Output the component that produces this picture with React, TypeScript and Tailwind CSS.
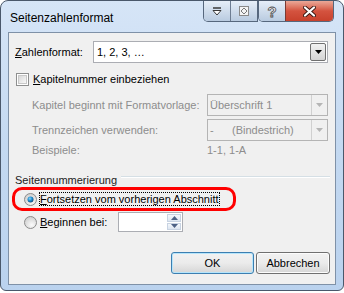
import React from "react";

function Arrow({ color = "#000" }: { color?: string }) {
  return (
    <svg width="7" height="4" viewBox="0 0 7 4">
      <path d="M0 0h7L3.5 4z" fill={color} />
    </svg>
  );
}

function Checkbox() {
  return (
    <div className="w-[13px] h-[13px] border border-[#8e8f8f] bg-white p-[1px] shrink-0">
      <div className="w-full h-full border border-[#c8c8c8] bg-gradient-to-br from-[#d8d8d8] to-[#f8f8f8]" />
    </div>
  );
}

function Radio({ checked }: { checked?: boolean }) {
  return (
    <svg width="13" height="13" viewBox="0 0 13 13" className="shrink-0">
      <defs>
        <radialGradient id="rbg" cx="0.6" cy="0.7" r="0.7">
          <stop offset="0" stopColor="#fbfbfb" />
          <stop offset="1" stopColor="#cfcfcf" />
        </radialGradient>
        <radialGradient id="rdot" cx="0.4" cy="0.35" r="0.7">
          <stop offset="0" stopColor="#8fd3f5" />
          <stop offset="0.5" stopColor="#1c8fd0" />
          <stop offset="1" stopColor="#0b3f72" />
        </radialGradient>
      </defs>
      <circle cx="6.5" cy="6.5" r="6" fill="url(#rbg)" stroke="#8c8c8c" />
      {checked && <circle cx="6.5" cy="6.5" r="3" fill="url(#rdot)" />}
    </svg>
  );
}

function DisabledCombo({ children }: { children: React.ReactNode }) {
  return (
    <div className="w-[121px] h-[22px] border border-[#b4b4b4] bg-[#f0f0f0] flex">
      <div className="flex-1 pl-[2px] flex items-center text-[#8d8d8d]">{children}</div>
      <div className="w-[16px] border-l border-[#d0d0d0] flex items-center justify-center">
        <Arrow color="#b5b5b5" />
      </div>
    </div>
  );
}

function TitleButton({ children, className }: { children: React.ReactNode; className: string }) {
  return <div className={"h-[20px] flex items-center justify-center " + className}>{children}</div>;
}

export default function App() {
  return (
    <div
      className="w-[344px] h-[293px] bg-white text-[11px] text-black whitespace-nowrap"
      style={{ fontFamily: "'Liberation Sans', Arial, sans-serif" }}
    >
      <div className="w-[344px] h-[291px] rounded-t-[8px] rounded-b-[6px] border border-[#4a586b] bg-gradient-to-b from-[#d6e5f7] via-[#c4d9f1] to-[#bad2ee] flex flex-col">
        {/* title bar */}
        <div className="h-[31px] flex items-start justify-between pl-[9px] pr-[9px] shrink-0">
          <div className="pt-[8px] text-[12px] text-black">Seitenzahlenformat</div>
          <div className="flex">
            <div className="flex border border-t-0 border-[#56677d] rounded-bl-[5px] overflow-hidden">
              <TitleButton className="w-[27px] bg-gradient-to-b from-[#e6eef8] to-[#b9cbe0] border-r border-[#6d7d92]">
                <svg width="10" height="9" viewBox="0 0 10 9">
                  <path d="M1 1h8" stroke="#3a3a3a" strokeWidth="1.5" />
                  <path d="M1 3.5h8L5 8z" fill="#fff" stroke="#3a3a3a" strokeWidth="1" />
                </svg>
              </TitleButton>
              <TitleButton className="w-[26px] bg-gradient-to-b from-[#e6eef8] to-[#b9cbe0]">
                <svg width="10" height="10" viewBox="0 0 10 10">
                  <rect x="0.5" y="0.5" width="9" height="9" fill="#f4f4f4" stroke="#8a8a8a" />
                  <path d="M5 2l3 3-3 3-3-3z" fill="none" stroke="#7a7a7a" />
                </svg>
              </TitleButton>
            </div>
            <div className="flex border border-t-0 border-[#56677d] rounded-bl-[5px] rounded-br-[5px] overflow-hidden">
              <TitleButton className="w-[27px] bg-gradient-to-b from-[#e6eef8] to-[#b9cbe0] border-r border-[#7a3a32]">
                <span
                  className="text-[15px] font-bold text-[#f4f6f9] leading-none"
                  style={{ WebkitTextStroke: "0.8px #4a4a4a" }}
                >
                  ?
                </span>
              </TitleButton>
              <TitleButton className="w-[47px] bg-gradient-to-b from-[#eaa898] via-[#d4533f] to-[#c8412c]">
                <svg width="13" height="11" viewBox="0 0 13 11">
                  <path d="M2 1.5l9 8M11 1.5l-9 8" stroke="#3b1a14" strokeWidth="4" strokeLinecap="round" />
                  <path d="M2 1.5l9 8M11 1.5l-9 8" stroke="#fff" strokeWidth="2.2" strokeLinecap="round" />
                </svg>
              </TitleButton>
            </div>
          </div>
        </div>

        {/* client area */}
        <div className="mx-[7px] mb-[5px] flex-1 border border-[#7f91a7] bg-[#f0f0f0] flex flex-col pt-[8px] pl-[6px] pr-[5px]">
          <div className="h-[22px] flex items-center">
            <div className="w-[78px]">
              <span className="underline">Z</span>ahlenformat:
            </div>
            <div className="w-[235px] h-[22px] border border-[#abadb3] bg-white flex">
              <div className="flex-1 pl-[3px] flex items-center">1, 2, 3, …</div>
              <div className="w-[16px] my-[1px] mr-[1px] border border-[#707070] rounded-[2px] bg-gradient-to-b from-[#f2f2f2] to-[#d4d4d4] flex items-center justify-center">
                <Arrow />
              </div>
            </div>
          </div>

          <div className="h-[16px] mt-[8px] flex items-center gap-[4px] pl-[1px]">
            <Checkbox />
            <div>
              <span className="underline">K</span>apitelnummer einbeziehen
            </div>
          </div>

          <div className="h-[22px] mt-[7px] flex items-center pl-[17px]">
            <div className="w-[175px] text-[#8d8d8d]">Kapitel beginnt mit Formatvorlage:</div>
            <DisabledCombo>Überschrift 1</DisabledCombo>
          </div>

          <div className="h-[22px] mt-[3px] flex items-center pl-[17px]">
            <div className="w-[175px] text-[#8d8d8d]">Trennzeichen verwenden:</div>
            <DisabledCombo>
              <span className="w-[22px]">-</span>(Bindestrich)
            </DisabledCombo>
          </div>

          <div className="h-[16px] mt-[1px] flex items-center pl-[17px] text-[#8d8d8d]">
            <div className="w-[175px]">Beispiele:</div>
            <div>1-1, 1-A</div>
          </div>

          <div className="h-[14px] mt-[15px] flex items-start">
            <div className="leading-[14px] text-[#222]">Seitennummerierung</div>
            <div className="flex-1 mt-[3px] ml-[4px] h-[2px] border-t border-[#d5dfe5] border-b border-b-white" />
          </div>

          <div className="-ml-[3px] w-[224px] h-[24px] border-[3px] border-[#ff0000] rounded-[10px] flex items-center pl-[9px]">
            <Radio checked />
            <div className="ml-[2px] px-[1px] leading-[14px] outline outline-1 outline-dotted outline-black -outline-offset-1">
              <span className="underline">F</span>ortsetzen vom vorherigen Abschnitt
            </div>
          </div>

          <div className="h-[20px] mt-[1px] flex items-center pl-[9px]">
            <Radio />
            <div className="ml-[3px] w-[78px]">
              <span className="underline">B</span>eginnen bei:
            </div>
            <div className="w-[65px] h-[20px] border border-[#abadb3] bg-white flex justify-end">
              <div className="w-[16px] flex flex-col gap-[1px] p-[1px]">
                <div className="flex-1 border border-[#c8d3e2] bg-gradient-to-b from-[#f4f7fb] to-[#dde6f1] flex items-center justify-center">
                  <svg width="7" height="4" viewBox="0 0 7 4">
                    <path d="M3.5 0L7 4H0z" fill="#4d6185" />
                  </svg>
                </div>
                <div className="flex-1 border border-[#c8d3e2] bg-gradient-to-b from-[#f4f7fb] to-[#dde6f1] flex items-center justify-center">
                  <svg width="7" height="4" viewBox="0 0 7 4">
                    <path d="M0 0h7L3.5 4z" fill="#4d6185" />
                  </svg>
                </div>
              </div>
            </div>
          </div>

          <div className="mt-[20px] flex justify-end gap-[2px]">
            <button className="w-[83px] h-[22px] rounded-[3px] border border-[#3c7fb1] bg-gradient-to-b from-[#f2f2f2] via-[#ebebeb] to-[#d6d6d6] shadow-[inset_0_0_0_1px_#b6e5fb]">
              OK
            </button>
            <button className="w-[74px] h-[22px] rounded-[3px] border border-[#707070] bg-gradient-to-b from-[#f2f2f2] via-[#ebebeb] to-[#d6d6d6] shadow-[inset_0_0_0_1px_#fcfcfc]">
              Abbrechen
            </button>
          </div>
        </div>
      </div>
    </div>
  );
}
